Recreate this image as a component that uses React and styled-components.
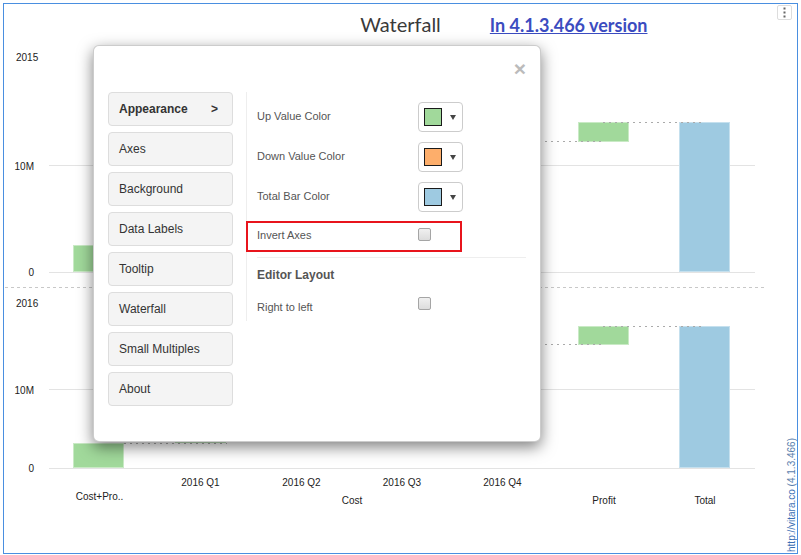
import React from 'react';
import styled, { createGlobalStyle } from 'styled-components';

const GlobalStyle = createGlobalStyle`
  html, body { margin: 0; padding: 0; background: #fff; }
  body { font-family: "Liberation Sans", Arial, sans-serif; }
  * { box-sizing: border-box; }
`;

const Page = styled.div`
  width: 801px;
  height: 555px;
  padding: 3px;
`;

const Frame = styled.div`
  position: relative;
  width: 795px;
  height: 551px;
  border: 1px solid #4a8fe0;
  display: flex;
  flex-direction: column;
  overflow: hidden;
`;

const Header = styled.header`
  height: 40px;
  padding-top: 8px;
  display: grid;
  grid-template-columns: 1fr auto 1fr;
  align-items: baseline;
`;

const Title = styled.h1`
  margin: 0;
  font: 400 20px/24px Lato, "Open Sans", sans-serif;
  color: #3a3a3a;
`;

const VersionLink = styled.a`
  justify-self: start;
  margin-left: 49px;
  font: 700 18px/24px Lato, "Open Sans", sans-serif;
  color: #3b4cc0;
  text-decoration: underline;
`;

const MenuButton = styled.button`
  position: absolute;
  top: 1px;
  right: 5px;
  width: 15px;
  height: 15px;
  padding: 0;
  border: 1px solid #ddd;
  border-radius: 2px;
  background: #fff;
  display: flex;
  align-items: center;
  justify-content: center;
`;

const Chart = styled.svg`
  display: block;
  width: 793px;
  height: 509px;
`;

const AxisText = styled.text`
  font: 10px "Liberation Sans", Arial, sans-serif;
  fill: #222;
`;

const Credit = styled.div`
  position: absolute;
  right: 0;
  bottom: 1px;
  writing-mode: vertical-rl;
  transform: rotate(180deg);
  font: 10px/11px "Liberation Sans", Arial, sans-serif;
  color: #5a80ad;
  white-space: nowrap;
`;

const CreditLink = styled.a`
  color: #3a6fb5;
  text-decoration: underline;
`;

const Modal = styled.div`
  position: absolute;
  left: 89px;
  top: 41px;
  width: 448px;
  height: 397px;
  background: #fff;
  border: 1px solid rgba(0, 0, 0, 0.2);
  border-radius: 6px;
  box-shadow: 0 5px 15px rgba(0, 0, 0, 0.5);
  padding: 0 14px;
  display: flex;
  flex-direction: column;
`;

const ModalHeader = styled.div`
  height: 46px;
  padding-top: 12px;
  display: flex;
  justify-content: flex-end;
  align-items: flex-start;
`;

const CloseButton = styled.button`
  border: 0;
  background: none;
  padding: 0;
  font: 700 21px/1 "Liberation Sans", Arial, sans-serif;
  color: #bbb;
`;

const ModalBody = styled.div`
  display: flex;
  align-items: flex-start;
  gap: 13px;
`;

const Nav = styled.nav`
  width: 125px;
  display: flex;
  flex-direction: column;
  gap: 6px;
`;

const NavItem = styled.button`
  height: 34px;
  padding: 0 14px 0 10px;
  display: flex;
  align-items: center;
  justify-content: space-between;
  background: #f4f4f4;
  border: 1px solid #ddd;
  border-radius: 4px;
  font: ${(p) => (p.$active ? 700 : 400)} 12px "Liberation Sans", Arial, sans-serif;
  color: #333;
  text-align: left;
`;

const Settings = styled.section`
  flex: 1;
  height: 229px;
  border-left: 1px solid #eee;
  padding: 10px 0 0 10px;
  display: flex;
  flex-direction: column;
`;

const RowGroup = styled.div`
  display: flex;
  flex-direction: column;
  gap: 10px;
`;

const Row = styled.div`
  position: relative;
  height: 30px;
  margin-top: ${(p) => p.$mt || 0}px;
  display: grid;
  grid-template-columns: 161px auto;
  align-items: center;
  justify-items: start;
`;

const Label = styled.span`
  margin-bottom: ${(p) => (p.$lift === undefined ? 2 : p.$lift)}px;
  font: 11px "Liberation Sans", Arial, sans-serif;
  color: #555;
`;

const ColorPicker = styled.button`
  width: 45px;
  height: 30px;
  padding: 0 0 0 5px;
  border: 1px solid #ccc;
  border-radius: 4px;
  background: #fff;
  display: flex;
  align-items: center;
  gap: 8px;
`;

const Swatch = styled.span`
  width: 18px;
  height: 18px;
  border: 1px solid #1a1a1a;
  background: ${(p) => p.$color};
`;

const Caret = styled.span`
  width: 0;
  height: 0;
  border-left: 3px solid transparent;
  border-right: 3px solid transparent;
  border-top: 5px solid #444;
`;

const Checkbox = styled.span`
  width: 13px;
  height: 13px;
  margin-bottom: ${(p) => p.$lift || 0}px;
  border: 1px solid #a5a5a5;
  border-radius: 2px;
  background: linear-gradient(#f0f0f0, #dcdcdc);
`;

const Highlight = styled.span`
  position: absolute;
  left: -11px;
  top: -1px;
  width: 216px;
  height: 31px;
  border: 2px solid #e8141c;
  pointer-events: none;
`;

const Divider = styled.hr`
  margin: 5px 0 0;
  border: 0;
  border-top: 1px solid #eee;
`;

const SectionTitle = styled.h4`
  margin: 10px 0 0;
  font: 700 12px/14px "Liberation Sans", Arial, sans-serif;
  color: #555;
`;

const navItems = [
  'Appearance',
  'Axes',
  'Background',
  'Data Labels',
  'Tooltip',
  'Waterfall',
  'Small Multiples',
  'About',
];

const GREEN = '#a1d99b';
const BLUE = '#9ecae1';

const categories = [
  { label: 'Cost+Pro..', x: 99.5, y: 500 },
  { label: '2016 Q1', x: 200.5, y: 486 },
  { label: '2016 Q2', x: 301.5, y: 486 },
  { label: '2016 Q3', x: 402, y: 486 },
  { label: '2016 Q4', x: 502.5, y: 486 },
  { label: 'Cost', x: 352, y: 504 },
  { label: 'Profit', x: 604, y: 504 },
  { label: 'Total', x: 705, y: 504 },
];

function Panel({ name, nameY, grid, zero, bars, connectors }) {
  return (
    <g>
      <AxisText x={16} y={nameY}>{name}</AxisText>
      <line x1={49} x2={755} y1={grid + 0.5} y2={grid + 0.5} stroke="#e3e3e3" />
      <line x1={49} x2={755} y1={zero + 0.5} y2={zero + 0.5} stroke="#e3e3e3" />
      <AxisText x={34} y={grid + 5} textAnchor="end">10M</AxisText>
      <AxisText x={34} y={zero + 4} textAnchor="end">0</AxisText>
      {bars.map((b, i) => (
        <rect
          key={i}
          x={b.x + 0.5}
          y={b.y + 0.5}
          width={50}
          height={b.h - 1}
          fill={b.color}
          stroke={b.color === BLUE ? '#c5e0ee' : '#c9eac5'}
        />
      ))}
      {connectors.map((c, i) => (
        <line
          key={i}
          x1={c.x1}
          x2={c.x2}
          y1={c.y + 0.5}
          y2={c.y + 0.5}
          stroke="#aaa"
          strokeDasharray="2 4"
        />
      ))}
    </g>
  );
}

function WaterfallChart() {
  return (
    <Chart viewBox="4 44 793 509">
      <Panel
        name="2015"
        nameY={61}
        grid={165}
        zero={272}
        bars={[
          { x: 73, y: 245, h: 27, color: GREEN },
          { x: 175, y: 215, h: 30, color: GREEN },
          { x: 276, y: 190, h: 25, color: GREEN },
          { x: 377, y: 165, h: 25, color: GREEN },
          { x: 477, y: 141, h: 24, color: GREEN },
          { x: 578, y: 122, h: 20, color: GREEN },
          { x: 679, y: 122, h: 150, color: BLUE },
        ]}
        connectors={[
          { x1: 503, x2: 602, y: 141 },
          { x1: 603, x2: 703, y: 122 },
        ]}
      />
      <line x1={5} x2={765} y1={287.5} y2={287.5} stroke="#c8c8c8" strokeDasharray="3 3" />
      <Panel
        name="2016"
        nameY={307}
        grid={389}
        zero={468}
        bars={[
          { x: 73, y: 443, h: 25, color: GREEN },
          { x: 175, y: 415, h: 28, color: GREEN },
          { x: 276, y: 390, h: 25, color: GREEN },
          { x: 377, y: 366, h: 24, color: GREEN },
          { x: 477, y: 344, h: 22, color: GREEN },
          { x: 578, y: 326, h: 19, color: GREEN },
          { x: 679, y: 326, h: 142, color: BLUE },
        ]}
        connectors={[
          { x1: 124, x2: 227, y: 443 },
          { x1: 503, x2: 602, y: 344 },
          { x1: 603, x2: 703, y: 326 },
        ]}
      />
      {categories.map((c) => (
        <AxisText key={c.label} x={c.x} y={c.y} textAnchor="middle">
          {c.label}
        </AxisText>
      ))}
    </Chart>
  );
}

function SettingsDialog() {
  return (
    <Modal role="dialog">
      <ModalHeader>
        <CloseButton aria-label="Close">×</CloseButton>
      </ModalHeader>
      <ModalBody>
        <Nav>
          {navItems.map((item, i) => (
            <NavItem key={item} $active={i === 0}>
              <span>{item}</span>
              {i === 0 && <span>&gt;</span>}
            </NavItem>
          ))}
        </Nav>
        <Settings>
          <RowGroup>
            <Row>
              <Label>Up Value Color</Label>
              <ColorPicker>
                <Swatch $color="#a1d99b" />
                <Caret />
              </ColorPicker>
            </Row>
            <Row>
              <Label>Down Value Color</Label>
              <ColorPicker>
                <Swatch $color="#fdae6b" />
                <Caret />
              </ColorPicker>
            </Row>
            <Row>
              <Label>Total Bar Color</Label>
              <ColorPicker>
                <Swatch $color="#9ecae1" />
                <Caret />
              </ColorPicker>
            </Row>
            <Row>
              <Label $lift={4}>Invert Axes</Label>
              <Checkbox $lift={6} />
              <Highlight />
            </Row>
          </RowGroup>
          <Divider />
          <SectionTitle>Editor Layout</SectionTitle>
          <Row $mt={10}>
            <Label $lift={0}>Right to left</Label>
            <Checkbox $lift={6} />
          </Row>
        </Settings>
      </ModalBody>
    </Modal>
  );
}

export default function App() {
  return (
    <>
      <GlobalStyle />
      <Page>
        <Frame>
          <Header>
            <span />
            <Title>Waterfall</Title>
            <VersionLink href="#">In 4.1.3.466 version</VersionLink>
          </Header>
          <WaterfallChart />
          <MenuButton aria-label="Menu">
            <svg width="3" height="11" viewBox="0 0 3 11">
              <rect x="0.5" y="0.5" width="2" height="2" fill="#666" />
              <rect x="0.5" y="4.5" width="2" height="2" fill="#666" />
              <rect x="0.5" y="8.5" width="2" height="2" fill="#666" />
            </svg>
          </MenuButton>
          <Credit>
            <CreditLink href="#">http://vitara.co</CreditLink>{'  '}(4.1.3.466)
          </Credit>
          <SettingsDialog />
        </Frame>
      </Page>
    </>
  );
}
